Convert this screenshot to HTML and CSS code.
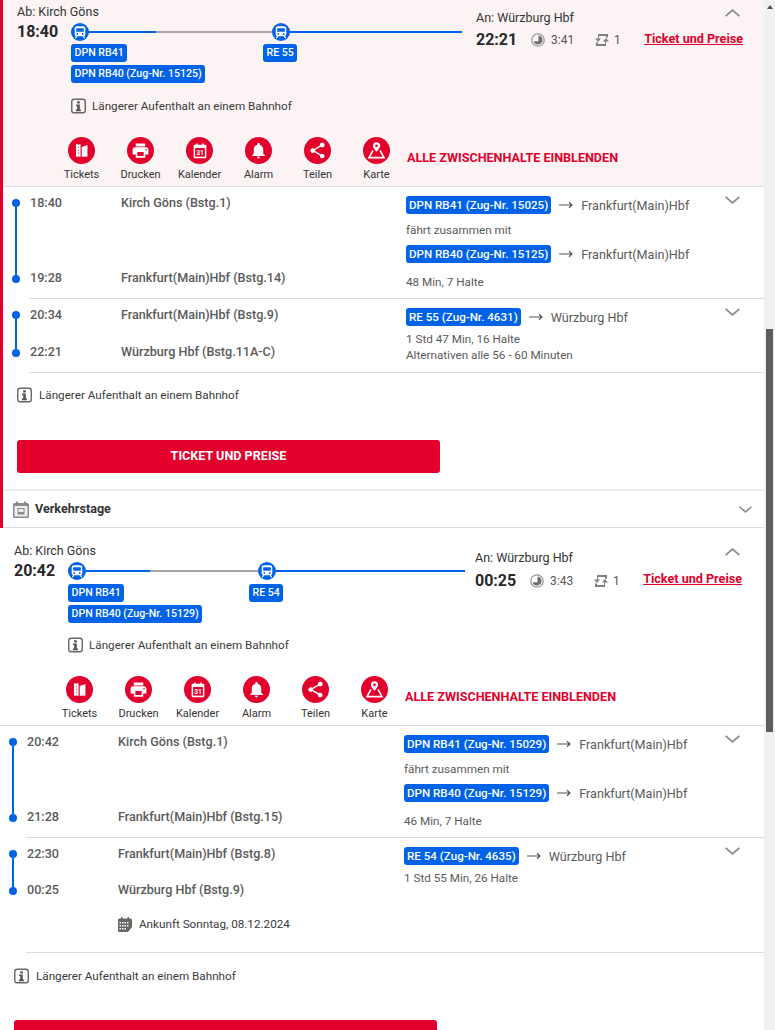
FILE: index.html
```html
<!DOCTYPE html>
<html lang="de">
<head>
	<meta charset="UTF-8">
	<title>Verbindungen</title>
	<link rel="stylesheet" href="styles.css">
</head>
<body>
	<svg class="defs" aria-hidden="true">
		<symbol id="i-train" viewBox="0 0 18 18">
			<path fill="#fff" d="M6.200 3.300h5.600c1.500 0 2.500.9 2.500 2.200v5.800c0 1-.6 1.700-1.500 2H5.200c-.9-.3-1.500-1-1.500-2V5.500c0-1.300 1-2.200 2.500-2.200z"/>
			<path fill="#0062e6" d="M5.200 5.300h7.600v3.400H5.200z"/>
			<circle fill="#0062e6" cx="6.300" cy="11" r=".9"/>
			<circle fill="#0062e6" cx="11.700" cy="11" r=".9"/>
			<path fill="none" stroke="#fff" stroke-width="1.200" d="M5.800 13.200 4.300 15.200M12.200 13.200l1.500 2"/>
		</symbol>
		<symbol id="i-info" viewBox="0 0 16 16">
			<rect x=".8" y=".8" width="14.400" height="14.400" rx="2.500" fill="none" stroke="#666" stroke-width="1.500"/>
			<path fill="#555" d="M6.600 2.800h2.800v2.400H6.600zM5.400 6.300h4v5.400h1.200v1.900H5.200v-1.900h1.400V8.100H5.400z"/>
		</symbol>
		<symbol id="i-clock" viewBox="0 0 14 14">
			<circle cx="7" cy="7" r="6.200" fill="none" stroke="#999" stroke-width="1.300"/>
			<path fill="#6e6e6e" d="M7.500 2.500A4.500 4.500 0 1 1 2.700 8.300h4.800z"/>
		</symbol>
		<symbol id="i-change" viewBox="0 0 14 14">
			<path fill="#808080" d="M3 1h10v3.500h-2V3H4v2.500h2L3 9 0 5.500h3zM11 13H1V9.500h2V11h7V8.500H8L11 5l3 3.500h-3z"/>
		</symbol>
		<symbol id="i-tickets" viewBox="0 0 24 24">
			<path fill="#fff" d="M5 4h2.300c.1 1 1.300 1 1.400 0h2.100v16H8.700c-.1-1-1.300-1-1.400 0H5zM12.300 7.500l4-1.500c.3.800 1.300.5 1.200-.3l2-.7v15h-2c-.1-.9-1.300-.9-1.400 0h-3.800z"/>
			<path fill="#e3002c" d="M7.500 7.500h1v1.500h-1zM7.500 11h1v1.500h-1zM7.500 14.500h1V16h-1z"/>
		</symbol>
		<symbol id="i-print" viewBox="0 0 24 24">
			<path fill="#fff" d="M19 8H5c-1.660 0-3 1.340-3 3v6h4v4h12v-4h4v-6c0-1.660-1.340-3-3-3zm-3 11H8v-5h8v5zm3-7c-.55 0-1-.45-1-1s.45-1 1-1 1 .45 1 1-.45 1-1 1zm-1-9H6v4h12V3z"/>
		</symbol>
		<symbol id="i-bell" viewBox="0 0 24 24">
			<path fill="#fff" d="M12 22c1.100 0 2-.9 2-2h-4c0 1.100.89 2 2 2zm6-6v-5c0-3.070-1.640-5.640-4.500-6.320V4c0-.83-.67-1.500-1.500-1.500s-1.500.67-1.500 1.500v.68C7.630 5.360 6 7.920 6 11v5l-2 2v1h16v-1l-2-2z"/>
		</symbol>
		<symbol id="i-share" viewBox="0 0 24 24">
			<path fill="#fff" d="M18 16.080c-.76 0-1.440.3-1.960.77L8.910 12.700c.05-.23.09-.46.09-.7s-.04-.47-.09-.7l7.050-4.110c.54.5 1.250.81 2.040.81 1.660 0 3-1.340 3-3s-1.340-3-3-3-3 1.340-3 3c0 .24.04.47.09.7L8.040 9.810C7.500 9.310 6.790 9 6 9c-1.660 0-3 1.340-3 3s1.340 3 3 3c.79 0 1.500-.31 2.040-.81l7.120 4.160c-.05.21-.08.43-.08.65 0 1.610 1.310 2.920 2.920 2.920s2.920-1.310 2.920-2.920-1.310-2.920-2.920-2.920z"/>
		</symbol>
		<symbol id="i-map" viewBox="0 0 24 24">
			<path fill="#fff" fill-rule="evenodd" d="M12 1.500a4.500 4.500 0 0 1 4.500 4.500c0 2.700-2.800 5.800-4.500 7.700-1.700-1.900-4.500-5-4.500-7.700A4.500 4.500 0 0 1 12 1.500zm0 2.800a1.700 1.700 0 1 0 0 3.400 1.700 1.700 0 0 0 0-3.400z"/>
			<path fill="none" stroke="#fff" stroke-width="2" d="M7.500 12 2.500 21h19l-5-9"/>
		</symbol>
		<symbol id="i-days" viewBox="0 0 16 17">
			<path fill="#8a8a8a" d="M1.500 2H3V.5h2V2h6V.5h2V2h1.500A1.500 1.500 0 0 1 16 3.500V15.500A1.500 1.500 0 0 1 14.500 17h-13A1.500 1.500 0 0 1 0 15.500V3.500A1.500 1.500 0 0 1 1.500 2z"/>
			<path fill="#eee" d="M1.500 5h13v10.500h-13z"/>
			<path fill="#8a8a8a" d="M4.500 7h7v6.500h-7z"/>
			<path fill="#eee" d="M5.500 8h5v3h-5z"/>
		</symbol>
		<symbol id="i-arrival" viewBox="0 0 14 15">
			<path fill="#666" d="M1.500 1.500H3V0h1.500v1.500h5V0H11v1.500h1.500A1.500 1.500 0 0 1 14 3v7l-4 5H1.500A1.500 1.500 0 0 1 0 13.500V3a1.500 1.500 0 0 1 1.500-1.500z"/>
			<path fill="#fff" d="M1.500 5H3v1.500H1.500zM4 5h1.500v1.500H4zM6.500 5H8v1.500H6.500zM9 5h1.500v1.500H9zM1.500 8H3v1.500H1.500zM4 8h1.500v1.500H4zM6.500 8H8v1.500H6.500zM9 8h1.500v1.500H9zM1.500 11H3v1.500H1.500zM4 11h1.500v1.500H4zM6.500 11H8v1.500H6.500z"/>
		</symbol>
		<symbol id="i-arrow" viewBox="0 0 14 8">
			<path fill="none" stroke="#555" stroke-width="1.200" d="M0 4h13M10 1.200 13 4l-3 2.800"/>
		</symbol>
		<symbol id="i-down" viewBox="0 0 15 8">
			<path fill="none" stroke="#888" stroke-width="1.700" d="M.6.8 7.500 6.800 14.400.8"/>
		</symbol>
		<symbol id="i-up" viewBox="0 0 15 8">
			<path fill="none" stroke="#888" stroke-width="1.700" d="M.6 7.200 7.500 1.200l6.900 6"/>
		</symbol>
	</svg>

	<div class="page">
		<main class="results">
			<div class="result-active">
				<section class="trip">
					<div class="head">
						<div class="head-top">
							<div class="dep">
								<div class="place">Ab: Kirch Göns</div>
								<div class="dep-line">
									<div class="time">18:40</div>
									<div class="rail">
										<svg class="train"><use href="#i-train"/></svg>
										<span class="seg seg-a"></span>
										<span class="seg seg-b"></span>
										<svg class="train"><use href="#i-train"/></svg>
										<span class="seg seg-c"></span>
									</div>
								</div>
								<div class="rail-chips">
									<div class="chips-first">
										<span class="chip">DPN RB41</span>
										<span class="chip">DPN RB40 (Zug-Nr. 15125)</span>
									</div>
									<span class="chip">RE 55</span>
								</div>
								<div class="notice notice-head">
									<svg class="info"><use href="#i-info"/></svg>
									<span>Längerer Aufenthalt an einem Bahnhof</span>
								</div>
							</div>
							<div class="arr">
								<div class="arr-top">
									<div class="place">An: Würzburg Hbf</div>
									<svg class="chev"><use href="#i-up"/></svg>
								</div>
								<div class="arr-line">
									<div class="time">22:21</div>
									<svg class="meta-icon clock"><use href="#i-clock"/></svg>
									<span class="meta meta-dur">3:41</span>
									<svg class="meta-icon"><use href="#i-change"/></svg>
									<span class="meta meta-num">1</span>
									<a class="price-link" href="#">Ticket und Preise</a>
								</div>
							</div>
						</div>
						<div class="actions">
							<a class="action" href="#"><span class="action-icon"><svg><use href="#i-tickets"/></svg></span>Tickets</a>
							<a class="action" href="#"><span class="action-icon"><svg><use href="#i-print"/></svg></span>Drucken</a>
							<a class="action" href="#"><span class="action-icon"><svg class="cal" viewBox="0 0 24 24"><path fill="#fff" d="M5 3.500h2V2h2v1.500h6V2h2v1.500h2A1.500 1.500 0 0 1 20.500 5v15a1.500 1.500 0 0 1-1.500 1.500H5A1.500 1.500 0 0 1 3.500 20V5A1.500 1.500 0 0 1 5 3.500z"/><path fill="#e3002c" d="M5.500 8h13v11.500h-13z"/><text x="12" y="17.500" text-anchor="middle" class="cal-num">31</text></svg></span>Kalender</a>
							<a class="action" href="#"><span class="action-icon"><svg><use href="#i-bell"/></svg></span>Alarm</a>
							<a class="action" href="#"><span class="action-icon"><svg><use href="#i-share"/></svg></span>Teilen</a>
							<a class="action" href="#"><span class="action-icon"><svg><use href="#i-map"/></svg></span>Karte</a>
							<a class="all-stops" href="#">ALLE ZWISCHENHALTE EINBLENDEN</a>
						</div>
					</div>

					<div class="leg">
						<div class="leg-rail"><i class="dot"></i><i class="line"></i><i class="dot"></i></div>
						<div class="leg-main">
							<div class="leg-left">
								<div class="stops">
									<div class="stop"><span class="stop-time">18:40</span><span>Kirch Göns (Bstg.1)</span></div>
									<div class="stop"><span class="stop-time">19:28</span><span>Frankfurt(Main)Hbf (Bstg.14)</span></div>
								</div>
							</div>
							<div class="leg-right">
								<div class="leg-info">
									<div class="run"><span class="chip">DPN RB41 (Zug-Nr. 15025)</span><svg class="arrow"><use href="#i-arrow"/></svg><span class="dest">Frankfurt(Main)Hbf</span></div>
									<div class="with">fährt zusammen mit</div>
									<div class="run"><span class="chip">DPN RB40 (Zug-Nr. 15125)</span><svg class="arrow"><use href="#i-arrow"/></svg><span class="dest">Frankfurt(Main)Hbf</span></div>
									<div class="run-meta run-meta-gap">48 Min, 7 Halte</div>
								</div>
								<svg class="chev"><use href="#i-down"/></svg>
							</div>
						</div>
					</div>

					<div class="leg">
						<div class="leg-rail"><i class="dot"></i><i class="line"></i><i class="dot"></i></div>
						<div class="leg-main">
							<div class="leg-left">
								<div class="stops">
									<div class="stop"><span class="stop-time">20:34</span><span>Frankfurt(Main)Hbf (Bstg.9)</span></div>
									<div class="stop"><span class="stop-time">22:21</span><span>Würzburg Hbf (Bstg.11A-C)</span></div>
								</div>
							</div>
							<div class="leg-right">
								<div class="leg-info">
									<div class="run"><span class="chip">RE 55 (Zug-Nr. 4631)</span><svg class="arrow"><use href="#i-arrow"/></svg><span class="dest">Würzburg Hbf</span></div>
									<div class="run-meta run-meta-first">1 Std 47 Min, 16 Halte</div>
									<div class="run-meta">Alternativen alle 56 - 60 Minuten</div>
								</div>
								<svg class="chev"><use href="#i-down"/></svg>
							</div>
						</div>
					</div>

					<div class="foot">
						<div class="notice">
							<svg class="info"><use href="#i-info"/></svg>
							<span>Längerer Aufenthalt an einem Bahnhof</span>
						</div>
						<a class="buy" href="#">TICKET UND PREISE</a>
					</div>
				</section>

				<div class="days">
					<svg class="days-icon"><use href="#i-days"/></svg>
					<span class="days-label">Verkehrstage</span>
					<svg class="chev"><use href="#i-down"/></svg>
				</div>
			</div>

			<section class="trip trip-plain">
				<div class="head">
					<div class="head-top">
						<div class="dep">
							<div class="place">Ab: Kirch Göns</div>
							<div class="dep-line">
								<div class="time">20:42</div>
								<div class="rail">
									<svg class="train"><use href="#i-train"/></svg>
									<span class="seg seg-a"></span>
									<span class="seg seg-b"></span>
									<svg class="train"><use href="#i-train"/></svg>
									<span class="seg seg-c"></span>
								</div>
							</div>
							<div class="rail-chips">
								<div class="chips-first">
									<span class="chip">DPN RB41</span>
									<span class="chip">DPN RB40 (Zug-Nr. 15129)</span>
								</div>
								<span class="chip">RE 54</span>
							</div>
							<div class="notice notice-head">
								<svg class="info"><use href="#i-info"/></svg>
								<span>Längerer Aufenthalt an einem Bahnhof</span>
							</div>
						</div>
						<div class="arr">
							<div class="arr-top">
								<div class="place">An: Würzburg Hbf</div>
								<svg class="chev"><use href="#i-up"/></svg>
							</div>
							<div class="arr-line">
								<div class="time">00:25</div>
								<svg class="meta-icon clock"><use href="#i-clock"/></svg>
								<span class="meta meta-dur">3:43</span>
								<svg class="meta-icon"><use href="#i-change"/></svg>
								<span class="meta meta-num">1</span>
								<a class="price-link" href="#">Ticket und Preise</a>
							</div>
						</div>
					</div>
					<div class="actions">
						<a class="action" href="#"><span class="action-icon"><svg><use href="#i-tickets"/></svg></span>Tickets</a>
						<a class="action" href="#"><span class="action-icon"><svg><use href="#i-print"/></svg></span>Drucken</a>
						<a class="action" href="#"><span class="action-icon"><svg class="cal" viewBox="0 0 24 24"><path fill="#fff" d="M5 3.500h2V2h2v1.500h6V2h2v1.500h2A1.500 1.500 0 0 1 20.500 5v15a1.500 1.500 0 0 1-1.500 1.500H5A1.500 1.500 0 0 1 3.500 20V5A1.500 1.500 0 0 1 5 3.500z"/><path fill="#e3002c" d="M5.500 8h13v11.500h-13z"/><text x="12" y="17.500" text-anchor="middle" class="cal-num">31</text></svg></span>Kalender</a>
						<a class="action" href="#"><span class="action-icon"><svg><use href="#i-bell"/></svg></span>Alarm</a>
						<a class="action" href="#"><span class="action-icon"><svg><use href="#i-share"/></svg></span>Teilen</a>
						<a class="action" href="#"><span class="action-icon"><svg><use href="#i-map"/></svg></span>Karte</a>
						<a class="all-stops" href="#">ALLE ZWISCHENHALTE EINBLENDEN</a>
					</div>
				</div>

				<div class="leg">
					<div class="leg-rail"><i class="dot"></i><i class="line"></i><i class="dot"></i></div>
					<div class="leg-main">
						<div class="leg-left">
							<div class="stops">
								<div class="stop"><span class="stop-time">20:42</span><span>Kirch Göns (Bstg.1)</span></div>
								<div class="stop"><span class="stop-time">21:28</span><span>Frankfurt(Main)Hbf (Bstg.15)</span></div>
							</div>
						</div>
						<div class="leg-right">
							<div class="leg-info">
								<div class="run"><span class="chip">DPN RB41 (Zug-Nr. 15029)</span><svg class="arrow"><use href="#i-arrow"/></svg><span class="dest">Frankfurt(Main)Hbf</span></div>
								<div class="with">fährt zusammen mit</div>
								<div class="run"><span class="chip">DPN RB40 (Zug-Nr. 15129)</span><svg class="arrow"><use href="#i-arrow"/></svg><span class="dest">Frankfurt(Main)Hbf</span></div>
								<div class="run-meta run-meta-gap">46 Min, 7 Halte</div>
							</div>
							<svg class="chev"><use href="#i-down"/></svg>
						</div>
					</div>
				</div>

				<div class="leg">
					<div class="leg-rail leg-rail-short"><i class="dot"></i><i class="line"></i><i class="dot"></i></div>
					<div class="leg-main">
						<div class="leg-left">
							<div class="stops stops-tight">
								<div class="stop"><span class="stop-time">22:30</span><span>Frankfurt(Main)Hbf (Bstg.8)</span></div>
								<div class="stop"><span class="stop-time">00:25</span><span>Würzburg Hbf (Bstg.9)</span></div>
							</div>
							<div class="arrival">
								<svg class="arrival-icon"><use href="#i-arrival"/></svg>
								<span>Ankunft Sonntag, 08.12.2024</span>
							</div>
						</div>
						<div class="leg-right">
							<div class="leg-info">
								<div class="run"><span class="chip">RE 54 (Zug-Nr. 4635)</span><svg class="arrow"><use href="#i-arrow"/></svg><span class="dest">Würzburg Hbf</span></div>
								<div class="run-meta run-meta-first">1 Std 55 Min, 26 Halte</div>
							</div>
							<svg class="chev"><use href="#i-down"/></svg>
						</div>
					</div>
				</div>

				<div class="foot">
					<div class="notice">
						<svg class="info"><use href="#i-info"/></svg>
						<span>Längerer Aufenthalt an einem Bahnhof</span>
					</div>
				</div>
				<span class="buy"></span>
			</section>
		</main>

		<div class="scrollbar">
			<span class="scroll-up"></span>
			<span class="scroll-thumb"></span>
		</div>
	</div>
</body>
</html>
```

FILE: styles.css
```css
html, body {
	margin: 0;
	padding: 0;
	height: 1030px;
	overflow: hidden;
	background: #fff;
}

body {
	font-family: Roboto, "Liberation Sans", sans-serif;
	font-size: 11.7px;
	line-height: 16px;
	color: #333;
}

a {
	color: inherit;
	text-decoration: none;
}

svg {
	display: block;
	flex: none;
}

.defs {
	width: 0;
	height: 0;
}

.page {
	display: flex;
	height: 1030px;
	overflow: hidden;
}

.results {
	width: 764px;
	flex: none;
}

/* scrollbar on the right */
.scrollbar {
	flex: 1;
	background: #f1f1f1;
	padding: 5px 2px 0;
}

.scroll-up {
	display: block;
	width: 0;
	height: 0;
	margin: 0 auto;
	border: 3px solid transparent;
	border-top: 0;
	border-bottom: 4px solid #505050;
}

.scroll-thumb {
	display: block;
	height: 403px;
	margin-top: 320px;
	background: #5d5d5d;
}

.result-active {
	border-left: 3px solid #e3002c;
}

.result-active .head {
	background: #fbf3f4;
}

/* trip overview */
.head {
	height: 186px;
	border-bottom: 1px solid #ddd;
	padding-left: 14px;
}

.head-top {
	display: flex;
	height: 137px;
}

.dep {
	padding-top: 4px;
	width: 445px;
	flex: none;
}

.place {
	font-size: 12.5px;
	color: #333;
}

.dep-line {
	display: flex;
	align-items: center;
	margin-top: 3px;
}

.time {
	width: 54px;
	flex: none;
	font-size: 16px;
	font-weight: 700;
	line-height: 18px;
	color: #282828;
}

.rail {
	display: flex;
	align-items: center;
	width: 391px;
}

.train {
	width: 18px;
	height: 18px;
	border-radius: 50%;
	background: #0062e6;
}

.seg {
	display: block;
	height: 2px;
	background: #0062e6;
}

.seg-a {
	width: 67px;
}

.seg-b {
	width: 116px;
	background: #a6a6a6;
}

.seg-c {
	flex: 1;
}

.rail-chips {
	display: flex;
	align-items: flex-start;
	margin: 3px 0 0 54px;
}

.rail-chips .chip {
	font-size: 10.6px;
	padding: 0 3.500px;
}

.chips-first {
	display: flex;
	flex-direction: column;
	align-items: flex-start;
	gap: 3px;
	width: 192px;
	flex: none;
}

.chip {
	display: block;
	flex: none;
	height: 18px;
	padding: 0 3px;
	border-radius: 3px;
	background: #0062e6;
	color: #fff;
	font-size: 11.6px;
	font-weight: 500;
	line-height: 18px;
	white-space: nowrap;
}

.notice {
	display: flex;
	align-items: center;
	gap: 7px;
	color: #3a3a3a;
}

.notice-head {
	margin: 15px 0 0 54px;
	gap: 6px;
}

.info {
	width: 15px;
	height: 16px;
}

.arr {
	flex: 1;
	padding: 9px 21px 0 14px;
}

.arr-top {
	display: flex;
	justify-content: space-between;
	align-items: flex-start;
	padding-right: 3px;
}

.arr-top .place {
	margin-top: 1px;
}

.arr-line {
	display: flex;
	align-items: center;
	margin-top: 5px;
}

.arr-line .time {
	width: 55px;
}

.meta-icon {
	width: 14px;
	height: 14px;
}

.meta {
	font-size: 12px;
	color: #555;
	line-height: 16px;
}

.meta-dur {
	width: 50px;
	padding-left: 6px;
	box-sizing: border-box;
}

.meta-num {
	padding-left: 5px;
}

.price-link {
	margin: 0 0 2px auto;
	color: #e3002c;
	font-size: 12.6px;
	font-weight: 700;
	text-decoration: underline;
	white-space: nowrap;
}

.chev {
	width: 15px;
	height: 8px;
}

/* icon row */
.actions {
	display: flex;
	padding-left: 35px;
}

.action {
	display: flex;
	flex-direction: column;
	align-items: center;
	width: 59px;
	flex: none;
	font-size: 11px;
	line-height: 14px;
	color: #333;
}

.action-icon {
	display: flex;
	align-items: center;
	justify-content: center;
	width: 27px;
	height: 27px;
	margin-bottom: 4px;
	border-radius: 50%;
	background: #e3002c;
}

.action-icon svg {
	width: 19px;
	height: 19px;
}

.action-icon .cal {
	width: 18px;
	height: 18px;
}

.cal-num {
	fill: #fff;
	font-family: Roboto, sans-serif;
	font-size: 9px;
	font-weight: 700;
}

.all-stops {
	margin: 13px 0 0 1px;
	color: #e3002c;
	font-size: 12.6px;
	font-weight: 700;
	white-space: nowrap;
}

/* stops and trains of a leg */
.leg {
	display: flex;
}

.leg-rail {
	display: flex;
	flex-direction: column;
	align-items: center;
	width: 8px;
	flex: none;
	padding: 12px 9px 16px;
}

.leg-rail-short {
	padding-bottom: 58px;
}

.dot {
	width: 8px;
	height: 8px;
	flex: none;
	border-radius: 50%;
	background: #0062e6;
}

.line {
	width: 2px;
	flex: 1;
	background: #0062e6;
}

.leg-main {
	display: flex;
	flex: 1;
	border-bottom: 1px solid #ddd;
}

.leg-left {
	display: flex;
	flex-direction: column;
	width: 377px;
	flex: none;
}

.stops {
	display: flex;
	flex-direction: column;
	justify-content: space-between;
	flex: 1;
	padding: 8px 0 12px 1px;
}

.stops-tight {
	flex: none;
	gap: 20px;
}

.stop {
	display: flex;
	font-size: 12.6px;
	font-weight: 500;
	color: #5a5a5a;
}

.stop-time {
	width: 91px;
	flex: none;
}

.arrival {
	display: flex;
	align-items: center;
	gap: 7px;
	margin: 6px 0 20px 92px;
	color: #3a3a3a;
}

.arrival-icon {
	width: 14px;
	height: 15px;
}

.leg-right {
	display: flex;
	justify-content: space-between;
	align-items: flex-start;
	flex: 1;
	padding: 9px 24px 0 0;
}

.leg-info {
	color: #5a5a5a;
	padding-bottom: 8px;
}

.run {
	display: flex;
	align-items: center;
	gap: 8px;
}

.dest {
	margin-top: 1px;
	font-size: 12.6px;
}

.arrow {
	width: 14px;
	height: 8px;
}

.with {
	margin: 8px 0 7px;
}

.run-meta-first {
	margin-top: 5px;
}

.run-meta + .run-meta {
	margin-bottom: 1px;
}

.run-meta-gap {
	margin-top: 11px;
}

.foot {
	padding: 14px 0 16px 14px;
}

.buy {
	display: block;
	width: 423px;
	height: 33px;
	margin-top: 37px;
	border-radius: 3px;
	background: #e3002c;
	color: #fff;
	font-size: 12.6px;
	font-weight: 700;
	line-height: 32px;
	text-align: center;
}

.trip-plain > .buy {
	margin: 20px 0 0 14px;
}

/* Verkehrstage bar */
.days {
	display: flex;
	align-items: center;
	height: 36px;
	padding: 0 12px 0 10px;
	border-top: 2px solid #eee;
	border-bottom: 1px solid #ddd;
}

.days-icon {
	width: 16px;
	height: 17px;
}

.days-label {
	flex: 1;
	margin-left: 6px;
	font-size: 12.6px;
	font-weight: 700;
	color: #333;
}

.days .chev {
	width: 13px;
	height: 7px;
}

/* second trip sits 3px further left, no marker */
.trip-plain {
	margin-top: 11px;
}

.trip-plain .dep {
	width: 451px;
}

.trip-plain .rail {
	width: 397px;
}

.trip-plain .seg-a {
	width: 64px;
}

.trip-plain .seg-b {
	width: 108px;
}

.trip-plain .rail-chips {
	margin-top: 4px;
}

.trip-plain .chips-first {
	width: 181px;
}

.trip-plain .notice-head {
	margin-top: 14px;
}

.trip-plain .arr {
	padding: 10px 22px 0 10px;
}

.trip-plain .arr-top {
	padding-right: 2px;
}

.trip-plain .arr-top .chev {
	margin-top: -1px;
}

.trip-plain .price-link {
	margin-bottom: 4px;
}

.trip-plain .actions {
	padding-left: 36px;
}

.trip-plain .leg-left {
	width: 378px;
}

.trip-plain .foot {
	padding-top: 15px;
}
```
